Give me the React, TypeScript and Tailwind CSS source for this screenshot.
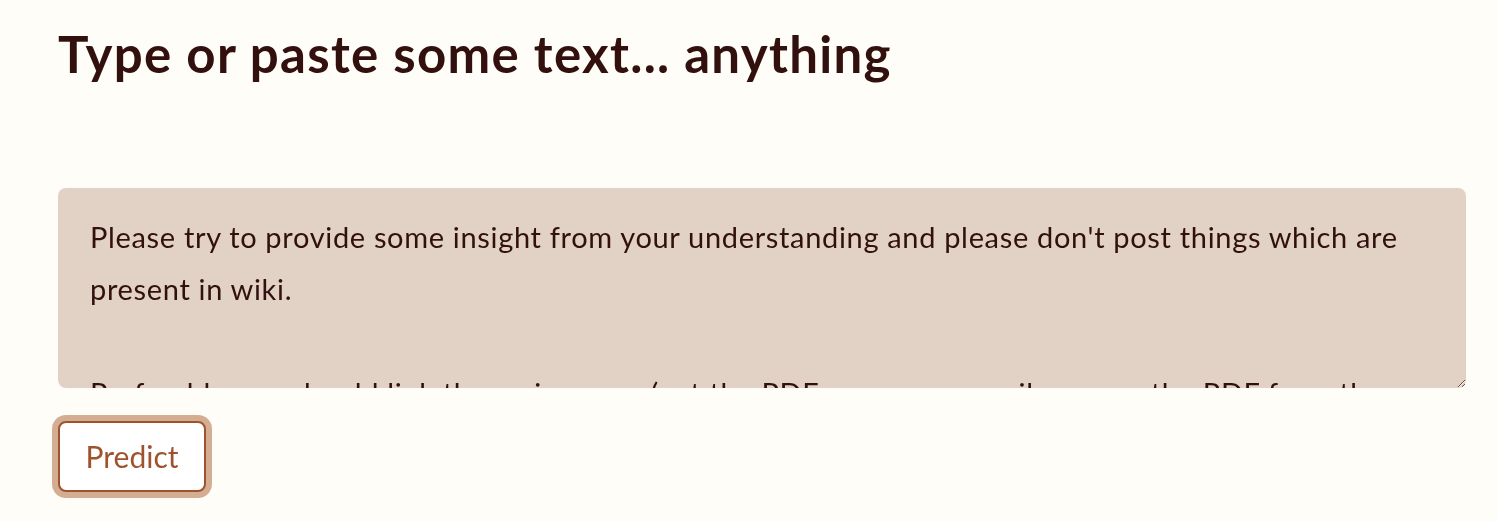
import React from 'react';

const text =
    "Please try to provide some insight from your understanding and please don't post things which are present in wiki.\n\nPreferably you should link the main paper (get the PDF as you can easily access the PDF from the arxiv link) and summarise it in your own words.";

const App = () => {
    return (
        <div className="min-h-screen w-full bg-[#fffdf8] text-[#31100e] font-['Lato',sans-serif]">
            <div className="pl-[58px] pr-[32px] pt-[24px]">
                {/* Title */}
                <h1 className="text-[51px] leading-[60px] font-bold tracking-[1.3px]">Type or paste some text... anything</h1>

                {/* Text input */}
                <textarea
                    defaultValue={text}
                    className="mt-[104px] block h-[200px] w-full resize-y rounded-lg bg-[#e2d1c5] px-[32px] pt-[23px] text-[29px] leading-[52px] tracking-[0.67px] text-[#31100e] outline-none font-['Lato',sans-serif]"
                />

                {/* Button */}
                <button className="mt-[33px] h-[71px] w-[148px] rounded-lg border-2 border-[#a0522d] bg-white text-[30px] text-[#a0522d] ring-[6px] ring-[#d4ae92] font-['Lato',sans-serif]">
                    Predict
                </button>
            </div>
        </div>
    );
};

export default App;
